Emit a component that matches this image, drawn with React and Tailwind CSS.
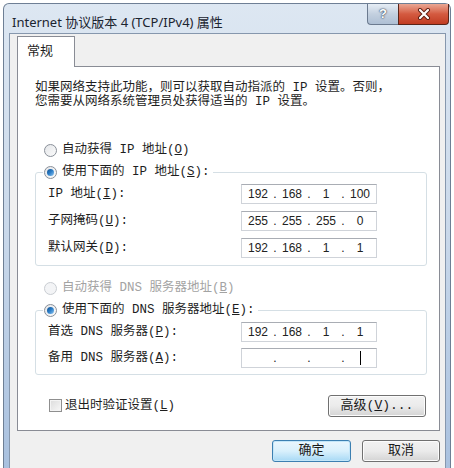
import React from 'react';

const cn = "font-['Liberation_Mono','Noto_Sans_CJK_SC',monospace]";

const Key = ({ k }) => (
  <span>
    (<u>{k}</u>)
  </span>
);

const Radio = ({ checked, disabled }) => (
  <span
    className={`w-[13px] h-[13px] rounded-full border flex items-center justify-center shrink-0 ${
      disabled
        ? 'border-[#c9cdd2] bg-[#f3f4f6]'
        : 'border-[#8a9099] bg-gradient-to-br from-[#e4e6e9] to-[#fbfbfb]'
    }`}
  >
    {checked && (
      <span className="w-[7px] h-[7px] rounded-full bg-gradient-to-br from-[#0f4e8f] via-[#2d7fc8] to-[#8cc7f2]" />
    )}
  </span>
);

const IpBox = ({ parts, caret }) => (
  <div className="w-[136px] h-[20px] bg-white border border-[#cfd3d9] border-t-[#a9adb4] flex items-center px-[1px] text-[12px] text-[#222] font-['Liberation_Sans',sans-serif]">
    {parts.map((p, i) => (
      <React.Fragment key={i}>
        {i > 0 && <span className="w-[4px] text-center">.</span>}
        <span className="w-[30px] flex justify-center items-center">
          {p}
          {caret && i === 3 && <span className="w-px h-[14px] bg-black" />}
        </span>
      </React.Fragment>
    ))}
  </div>
);

const Row = ({ label, parts, caret }) => (
  <div className="flex items-center h-[20px] pl-[12px]">
    <span className="w-[193px]">{label}</span>
    <IpBox parts={parts} caret={caret} />
  </div>
);

const Btn = ({ children, primary, className = '' }) => (
  <button
    className={`h-[22px] rounded-[3px] border text-[13px] text-[#1a1a1a] ${cn} ${
      primary
        ? 'border-[#3c7fb1] bg-gradient-to-b from-[#eaf6fd] via-[#d9f0fc] to-[#a7d9f5] shadow-[inset_0_0_0_1px_#c3e6f9]'
        : 'border-[#707070] bg-gradient-to-b from-[#f2f2f2] via-[#ebebeb] to-[#d4d4d4] shadow-[inset_0_0_0_1px_#fcfcfc]'
    } ${className}`}
  >
    {children}
  </button>
);

export default function App() {
  return (
    <div className="w-[454px] h-[468px] bg-white pt-[3px] px-[3px] overflow-hidden">
      <div className="h-full flex flex-col rounded-t-[6px] border border-b-0 border-[#6e7f95] bg-gradient-to-b from-[#dde7f2] via-[#c9d8ea] to-[#a9c1df]">
        {/* title bar */}
        <div className="h-[29px] flex justify-between items-start shrink-0">
          <span className="pl-[8px] pt-[9px] text-[13px] leading-[18px] text-[#1b2430] font-['Noto_Sans','Noto_Sans_CJK_SC',sans-serif]">
            Internet 协议版本 4 (TCP/IPv4) 属性
          </span>
          <div className="flex mr-[1px]">
            <div className="w-[31px] h-[21px] rounded-bl-[4px] border border-t-0 border-r-0 border-[#6b7a8f] bg-gradient-to-b from-[#e6edf5] via-[#c3d0df] to-[#aebfd4] flex items-center justify-center text-[13px] font-bold text-white font-['Liberation_Sans',sans-serif] [text-shadow:0_0_2px_#2a3a52,0_0_1px_#2a3a52]">
              ?
            </div>
            <div className="w-[51px] h-[21px] rounded-br-[4px] border border-t-0 border-[#5a2418] bg-gradient-to-b from-[#e9a794] via-[#d45a40] to-[#c13c22] flex items-center justify-center">
              <svg width="14" height="12" viewBox="0 0 14 12">
                <path d="M3 2 L11 10 M11 2 L3 10" stroke="#5a1a0e" strokeWidth="4" strokeLinecap="round" />
                <path d="M3 2 L11 10 M11 2 L3 10" stroke="#fff" strokeWidth="2.2" strokeLinecap="round" />
              </svg>
            </div>
          </div>
        </div>

        {/* client area */}
        <div className={`flex-1 ml-[5px] mr-[4px] bg-[#f0f0f0] border border-b-0 border-[#8697ad] pt-[2px] pl-[7px] pr-[5px] flex flex-col text-[12.5px] leading-[18px] text-[#1e1e1e] ${cn}`}>
          <div className="relative z-10 -mb-px w-[58px] h-[31px] bg-white border border-b-0 border-[#898c95] pl-[9px] pt-[6px] text-[13px]">
            常规
          </div>
          <div className="bg-white border border-[#898c95] pt-[14px] pb-[14px] flex flex-col">
            <p className="pl-[17px] leading-[14px] text-[12.5px]">
              如果网络支持此功能，则可以获取自动指派的 IP 设置。否则，
              <br />
              您需要从网络系统管理员处获得适当的 IP 设置。
            </p>

            <div className="mt-[32px] pl-[26px] h-[18px] flex items-center gap-[5px]">
              <Radio />
              <span>自动获得 IP 地址<Key k="O" /></span>
            </div>

            <fieldset className="mt-[4px] ml-[17px] mr-[12px] border border-[#d5dfe5] rounded-[3px] pt-[3px] pb-[7px] flex flex-col gap-[7px]">
              <legend className="ml-[7px] px-[1px] h-[18px] flex items-center gap-[5px] pr-[3px]">
                <Radio checked />
                <span>使用下面的 IP 地址<Key k="S" />:</span>
              </legend>
              <Row label={<>IP 地址<Key k="I" />:</>} parts={['192', '168', '1', '100']} />
              <Row label={<>子网掩码<Key k="U" />:</>} parts={['255', '255', '255', '0']} />
              <Row label={<>默认网关<Key k="D" />:</>} parts={['192', '168', '1', '1']} />
            </fieldset>

            <div className="mt-[13px] pl-[26px] h-[18px] flex items-center gap-[5px] text-[#a3a3a3]">
              <Radio disabled />
              <span>自动获得 DNS 服务器地址<Key k="B" /></span>
            </div>

            <fieldset className="mt-[4px] ml-[17px] mr-[12px] border border-[#d5dfe5] rounded-[3px] pt-[3px] pb-[6px] flex flex-col gap-[6px]">
              <legend className="ml-[7px] px-[1px] h-[18px] flex items-center gap-[5px] pr-[3px]">
                <Radio checked />
                <span>使用下面的 DNS 服务器地址<Key k="E" />:</span>
              </legend>
              <Row label={<>首选 DNS 服务器<Key k="P" />:</>} parts={['192', '168', '1', '1']} />
              <Row label={<>备用 DNS 服务器<Key k="A" />:</>} parts={['', '', '', '']} caret />
            </fieldset>

            <div className="mt-[20px] ml-[31px] mr-[13px] h-[21px] flex items-center justify-between">
              <div className="flex items-center gap-[3px]">
                <span className="w-[13px] h-[13px] border border-[#8f8f8f] bg-gradient-to-br from-[#dcdcdc] to-[#f8f8f8] shadow-[inset_0_0_0_1px_#f4f4f4]" />
                <span>退出时验证设置<Key k="L" /></span>
              </div>
              <Btn className="w-[98px] h-[21px]">高级<Key k="V" />...</Btn>
            </div>
          </div>

          <div className="mt-[9px] flex justify-end gap-[11px]">
            <Btn primary className="w-[79px]">确定</Btn>
            <Btn className="w-[78px]">取消</Btn>
          </div>
        </div>
      </div>
    </div>
  );
}
